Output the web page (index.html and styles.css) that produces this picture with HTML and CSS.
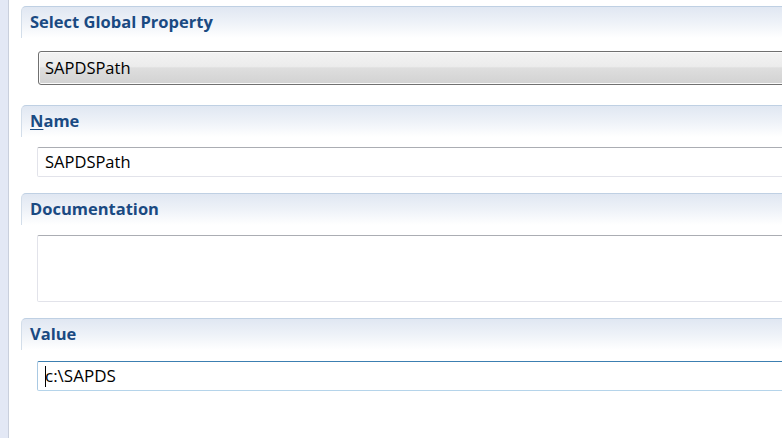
FILE: index.html
```html
<!DOCTYPE html>
<html>
<head>
<meta charset="utf-8">
<link rel="stylesheet" href="styles.css">
</head>
<body>
<div class="page">
  <div class="strip"></div>
  <div class="main">
    <section class="sec sec-first">
      <div class="sec-head">Select Global Property</div>
      <div class="combo">SAPDSPath</div>
    </section>
    <section class="sec">
      <div class="sec-head"><span class="mn">N</span>ame</div>
      <div class="field">SAPDSPath</div>
    </section>
    <section class="sec">
      <div class="sec-head">Documentation</div>
      <div class="field area"></div>
    </section>
    <section class="sec">
      <div class="sec-head">Value</div>
      <div class="field focus"><span class="caret"></span>c:\SAPDS</div>
    </section>
  </div>
</div>
</body>
</html>
```
FILE: styles.css
```css
html, body {
  margin: 0;
  padding: 0;
  background: #ffffff;
}
.page {
  display: flex;
  width: 782px;
  height: 438px;
  overflow: hidden;
  font-family: "Open Sans", "Noto Sans", sans-serif;
}
.strip {
  width: 8px;
  flex: none;
  background: #e3e8f5;
  border-right: 1px solid #c9cfdc;
}
.main {
  flex: 1;
  padding-left: 12px;
  padding-top: 6px;
  display: flex;
  flex-direction: column;
  gap: 16px;
}
.sec {
  margin-right: -20px;
}
.sec-head {
  height: 31px;
  border-top: 1px solid #bfd0e3;
  border-left: 1px solid #d3deea;
  border-top-left-radius: 5px;
  background: linear-gradient(#e0e7f2 0%, #eef2f8 50%, #ffffff 100%);
  color: #1a4a82;
  font-weight: bold;
  font-size: 16.5px;
  letter-spacing: 0;
  line-height: 29px;
  padding-left: 8px;
}
.sec-first { margin-bottom: 4px; }
.mn { text-decoration: underline; text-underline-offset: 2px; }
.combo {
  margin: 13px 0 0 17px;
  height: 32px;
  border: 1px solid #707070;
  border-radius: 3px;
  background: linear-gradient(#f3f3f3 0%, #ececec 45%, #dedede 50%, #d2d2d2 100%);
  box-shadow: inset 0 0 0 1px #fbfbfb;
  font-size: 16.5px;
  line-height: 32px;
  padding-left: 6px;
  color: #000;
}
.field {
  margin: 10px 0 0 16px;
  height: 28px;
  border: 1px solid #e2e3ea;
  border-top-color: #abadb3;
  border-radius: 2px;
  font-size: 16.5px;
  line-height: 28px;
  padding-left: 7px;
  color: #000;
  background: #fff;
}
.area {
  height: 65px;
}
.focus {
  margin-top: 11px;
  border-color: #b5d4ea;
  border-top-color: #3c7fb1;
  border-left-color: #a9c9e3;
  font-size: 17px;
}
.caret {
  display: inline-block;
  width: 1px;
  height: 21px;
  background: #000;
  vertical-align: -5px;
  margin-right: -1px;
}
```
